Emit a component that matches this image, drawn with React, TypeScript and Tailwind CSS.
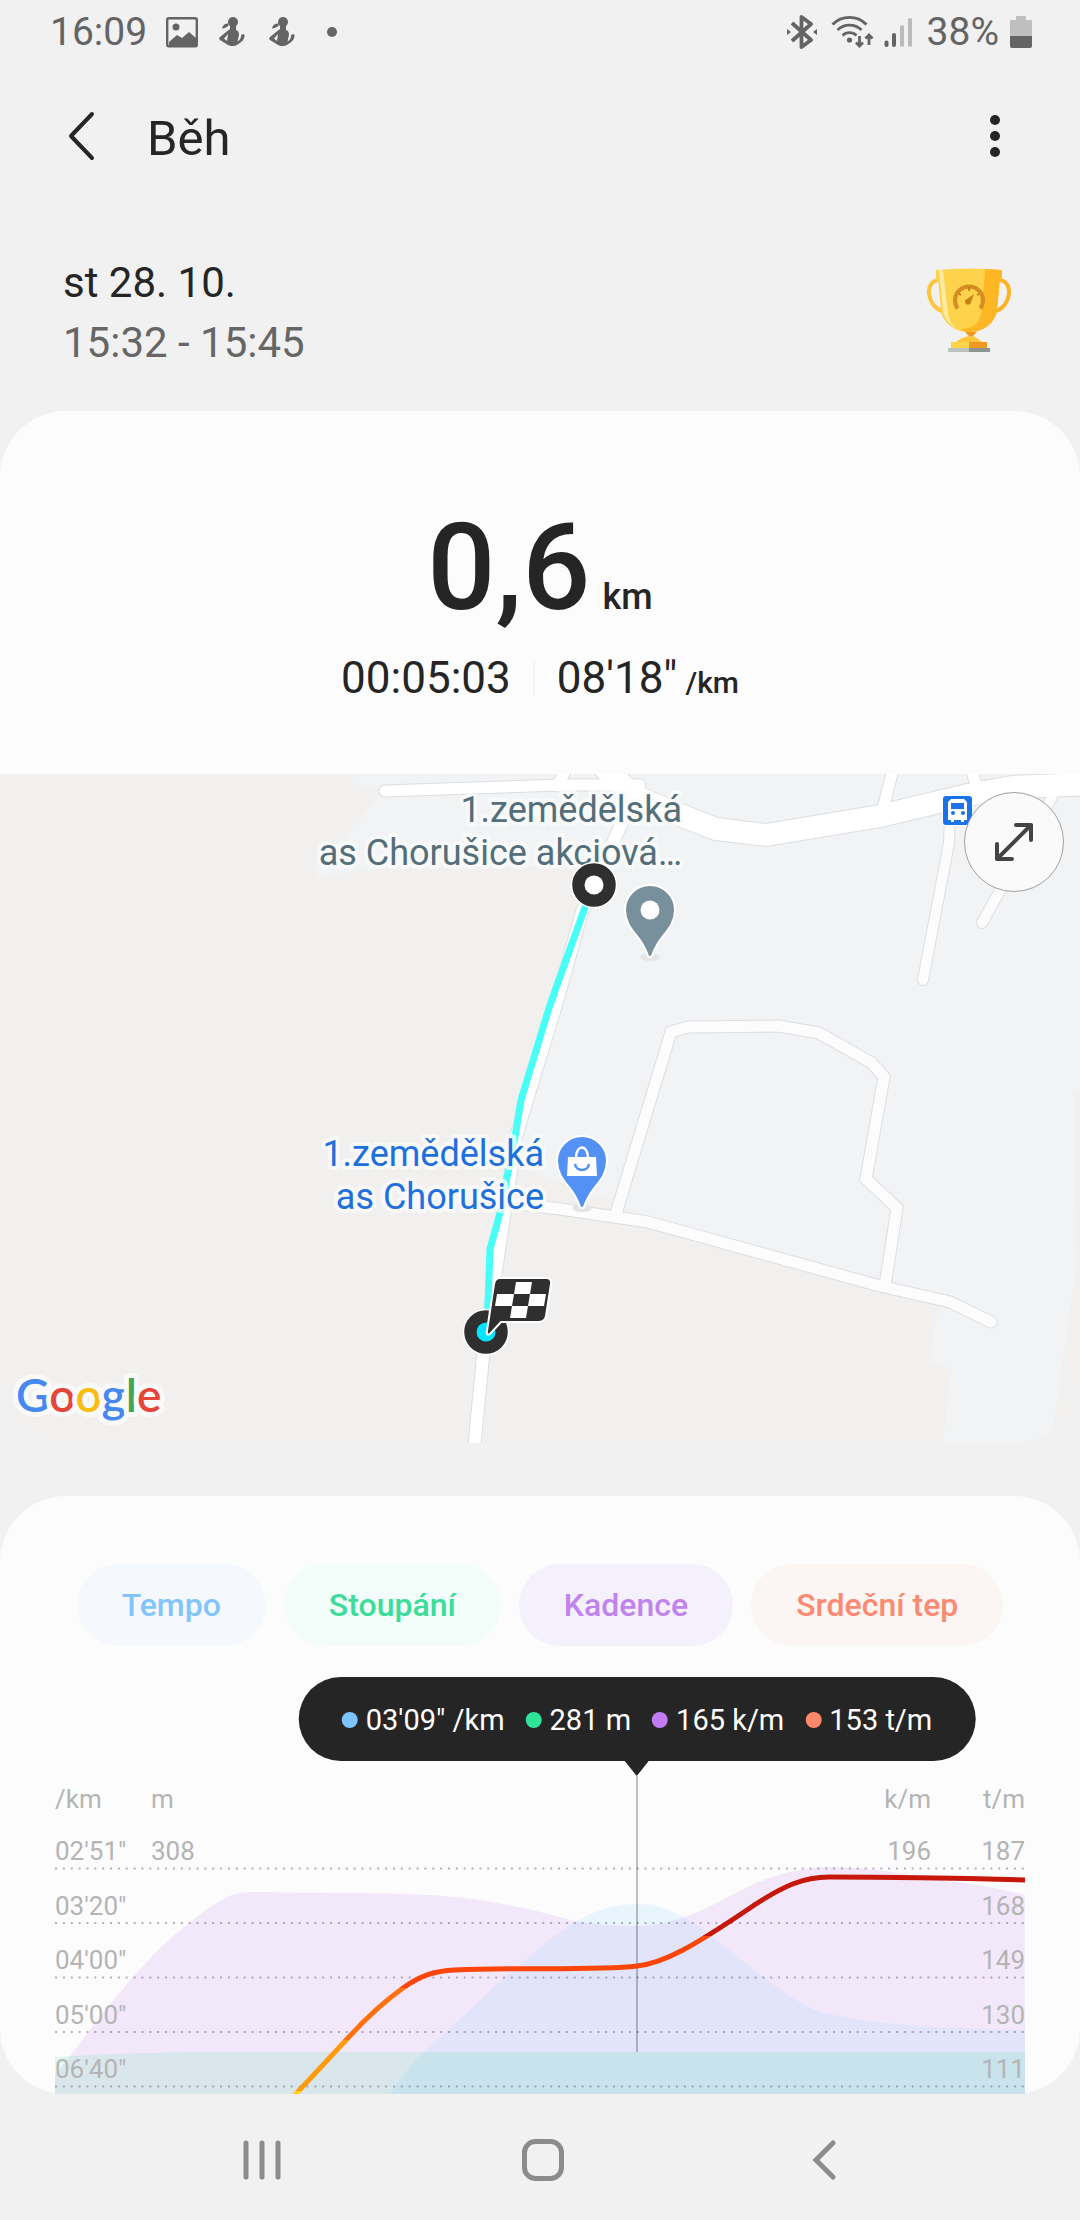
import { Fragment } from 'react';

const metrics = [
  { label: 'Tempo', value: `03'09" /km`, chip: 'bg-[#f5f9fd] text-[#83c4fb]', dot: 'bg-[#7cc3ff]' },
  { label: 'Stoupání', value: '281 m', chip: 'bg-[#f2fcf9] text-[#3cdc9a]', dot: 'bg-[#2fe39a]' },
  { label: 'Kadence', value: '165 k/m', chip: 'bg-[#f5f1fc] text-[#c183ec]', dot: 'bg-[#c27cf3]' },
  { label: 'Srdeční tep', value: '153 t/m', chip: 'bg-[#fbf5f4] text-[#fa8a72]', dot: 'bg-[#ff876b]' },
];

const axisRows = [
  { pace: `02'51"`, elevation: '308', cadence: '196', heart: '187' },
  { pace: `03'20"`, elevation: '', cadence: '', heart: '168' },
  { pace: `04'00"`, elevation: '', cadence: '', heart: '149' },
  { pace: `05'00"`, elevation: '', cadence: '', heart: '130' },
  { pace: `06'40"`, elevation: '', cadence: '', heart: '111' },
];

function WorkoutIcon() {
  return (
    <svg width="28" height="32" viewBox="0 0 28 32" fill="#646464" aria-hidden="true">
      <circle cx="15" cy="6" r="5" />
      <path d="M12 9h6v5c3 1 3.500 4 2.500 7l-1 4.500c2-1 3.500-3 3.500-5.500 0-2 3.500-2.500 3.500-.5 0 4-3 6.500-5.500 8-4 3.500-9 3.300-12.500.5L2 24c-1.300-1-1-2 0-3l8-6.500 2-1.500zM10 18l-4 4.500 3 2.500z" fillRule="evenodd" />
      <path d="M4 12.500c1-4 3-5 7-5l-1 3c-2 .5-3 2-6 2z" />
    </svg>
  );
}

function StatusBar() {
  return (
    <div className="flex h-[62px] items-center justify-between pl-[50px] pr-[48px] pt-px text-[39px] leading-[44px] text-[#646464]">
      <div className="flex items-center">
        <span>16:09</span>
        <svg className="ml-[19px]" width="32" height="32" viewBox="0 0 32 32" aria-hidden="true">
          <rect x="1.200" y="2.200" width="29.600" height="28" rx="1.500" fill="none" stroke="#646464" strokeWidth="2.400" />
          <circle cx="10" cy="11" r="3.500" fill="#646464" />
          <path d="M3 26l8-7 5 3 7-6 7 6v8H3z" fill="#646464" />
        </svg>
        <div className="ml-[20px] flex gap-[22px]">
          <WorkoutIcon />
          <WorkoutIcon />
        </div>
        <span className="ml-[31px] size-[10px] rounded-full bg-[#646464]" />
      </div>
      <div className="flex items-center">
        {/* Bluetooth */}
        <svg width="32" height="34" viewBox="0 0 32 34" aria-hidden="true">
          <path d="M6 8l19 17-9.500 7V2L25 9 6 26" fill="none" stroke="#646464" strokeWidth="3.800" strokeLinejoin="round" />
          <path d="M1 14l4 3-4 3zM31 14l-4 3 4 3z" fill="#646464" />
        </svg>
        {/* Wi-Fi */}
        <svg className="ml-[13px]" width="43" height="34" viewBox="0 0 43 34" fill="none" stroke="#646464" strokeWidth="2.800" aria-hidden="true">
          <path d="M1.500 9.500a24 24 0 0 1 34 0M6.500 15a17 17 0 0 1 24 0M11.500 20.500a10 10 0 0 1 14 0" />
          <circle cx="18.500" cy="25" r="2.600" fill="#646464" stroke="none" />
          <path d="M28.500 21v10M25 27.500l3.500 3.500 3.500-3.500M38 30V20M34.500 23.500L38 20l3.500 3.500" />
        </svg>
        {/* Signal */}
        <svg className="ml-[10px]" width="28" height="34" viewBox="0 0 28 34" strokeWidth="4" strokeLinecap="round" aria-hidden="true">
          <path d="M2.500 27.500v2.500M10 20v10" stroke="#646464" />
          <path d="M18 12v18M26 5v25" stroke="#bbb" />
        </svg>
        <span className="ml-[15px]">38%</span>
        {/* Battery */}
        <svg className="ml-[11px]" width="22" height="34" viewBox="0 0 22 34" aria-hidden="true">
          <path d="M6 1h10v4h5q1 0 1 1v15H0V6q0-1 1-1h5z" fill="#bfbfbf" />
          <path d="M0 21h22v10q0 2-2 2H2q-2 0-2-2z" fill="#646464" />
        </svg>
      </div>
    </div>
  );
}

function Trophy() {
  return (
    <svg width="90" height="90" viewBox="0 0 90 90" role="img" aria-label="Trofej">
      <path d="M14 12C0 14 3 38 18 43" fill="none" stroke="#fdc53c" strokeWidth="4" />
      <path d="M76 12C90 14 87 38 72 43" fill="none" stroke="#fdb424" strokeWidth="4" />
      <path d="M45 60v8c-5 1-10 3-13 6h26c-3-3-7-5-11-7l4-5z" fill="#fdc53c" />
      <path d="M41 64h12l-4 4h-4z" fill="#ee9a22" />
      <path d="M12 2q33-3 66 0v8h-2l-3 33c-2 12-14 21-28 21S19 55 17 43L14 10h-2z" fill="#fdd34c" />
      <path d="M61 1l17 1v8h-2l-3 33c-2 11-12 20-24 21-8 0-12-1-12-3 14 0 20-8 21-20z" fill="#fdb724" />
      <path d="M15 2h4l5 43c1 8 5 13 10 16-9-4-14-11-15-19z" fill="#feeaa0" />
      <path d="M33.500 40.500A14 14 0 1 1 56.500 40.500" fill="none" stroke="#d58c22" strokeWidth="4" />
      <path d="M45 19v4M35 26l2 1M55 26l-2 1" stroke="#b87512" strokeWidth="1.500" />
      <path d="M50 26l-3 8a3 3 0 1 1-4-3z" fill="#c98015" />
      <path d="M27 74h18v6H27z" fill="#fdd34c" />
      <path d="M45 74h18v6H45z" fill="#ee9a22" />
      <path d="M24 80h21v4H24z" fill="#b9c2bc" />
      <path d="M45 80h21v4H45z" fill="#8b9690" />
    </svg>
  );
}

const roads = [
  { d: 'M385 791L563 785L640 785', width: 11, fill: '#fff' },
  { d: 'M568 766L557 786', width: 11, fill: '#fff' },
  { d: 'M894 766L883 808', width: 11, fill: '#fff' },
  { d: 'M970 766L978 790', width: 11, fill: '#fff' },
  { d: 'M1052 797L982 923', width: 10, fill: '#fcfcfc' },
  { d: 'M950 815L949 843L923 980', width: 10, fill: '#fcfcfc' },
  { d: 'M615 1217L671 1032L688 1027L779 1026L819 1033L872 1063L884 1077L866 1179L897 1208L885 1286', width: 11, fill: '#fcfcfc' },
  { d: 'M510 1203L560 1209L615 1217L648 1222L880 1286L950 1302L991 1322', width: 11, fill: '#fcfcfc' },
  { d: 'M632 800L582 912L562 984L553 1015L527 1100L516 1137L507 1197L495 1277L483 1357L473 1460', width: 12, fill: '#fff' },
  { d: 'M592 756L634 796L680 815L716 829L766 835L880 816L968 795L1013 787L1090 784', width: 22, fill: '#fff' },
];

function RouteMap() {
  return (
    <div className="relative h-[669px] bg-[#f1f0ee]">
      <svg className="block h-full w-full" viewBox="0 774 1080 669" preserveAspectRatio="xMidYMid slice" role="img" aria-label="Mapa trasy">
        {/* Built-up area */}
        <path
          d="M346 774L357 785L380 789V797L343 838L315 865L318 877L400 866L590 866L582 912L553 1015L516 1137L528 1170L600 1197L650 1217L880 1282L938 1306L930 1362L952 1368L943 1443H1053V1430L1076 1267L1073 1090H1080V774Z"
          fill="#f1f3f5"
        />
        <g fill="none" strokeLinecap="round" strokeLinejoin="miter">
          {roads.map((road) => (
            <path key={road.d} d={road.d} stroke="#dcdee1" strokeWidth={road.width + 2} />
          ))}
          {roads.map((road) => (
            <path key={road.d} d={road.d} stroke={road.fill} strokeWidth={road.width} />
          ))}
          <path d="M593 885L556 988L549 1008L521 1100L515 1137L500 1213L490 1249L487 1331" stroke="#47fff6" strokeWidth="7" />
        </g>

        {/* Bus stop */}
        <rect x="942" y="795" width="31" height="31" rx="4" fill="#fff" />
        <rect x="943" y="796" width="29" height="29" rx="3" fill="#1a73e8" />
        <path d="M951 799h13l3 3v18h-3v2h-3v-2h-7v2h-3v-2h-3v-18z" fill="#fff" />
        <path d="M951 803h13v6h-13z" fill="#1a73e8" />
        <circle cx="953" cy="813" r="2" fill="#1a73e8" />
        <circle cx="963" cy="813" r="2" fill="#1a73e8" />

        <g
          className="font-['Roboto',sans-serif] text-[36px] [paint-order:stroke]"
          textAnchor="end"
          stroke="#fafbfb"
          strokeOpacity="0.8"
          strokeWidth="8"
          strokeLinejoin="round"
        >
          <text x="682" y="822" fill="#546e7a">1.zemědělská</text>
          <text x="682" y="865" fill="#546e7a">as Chorušice akciová…</text>
          <text x="544" y="1166" fill="#1f70dc">1.zemědělská</text>
          <text x="544" y="1209" fill="#1f70dc">as Chorušice</text>
        </g>

        {/* Place pins */}
        <ellipse cx="650" cy="957" rx="10" ry="4" fill="#e3e5e7" />
        <path d="M650 885a25 25 0 0 1 25 25c0 16-12 24-18 35-3 5-4 8-5 11q-2 2-4 0c-1-3-2-6-5-11-6-11-18-19-18-35a25 25 0 0 1 25-25z" fill="#78909c" stroke="#fff" strokeWidth="2" />
        <circle cx="650" cy="910" r="9.500" fill="#fff" />
        <ellipse cx="582" cy="1208" rx="10" ry="4" fill="#e3e5e7" />
        <path d="M582 1136a25 25 0 0 1 25 25c0 16-12 24-18 35-3 5-4 8-5 11q-2 2-4 0c-1-3-2-6-5-11-6-11-18-19-18-35a25 25 0 0 1 25-25z" fill="#5491f5" stroke="#fff" strokeWidth="2" />
        <path d="M568 1157h28l1 19h-30z" fill="#fff" />
        <path d="M576 1158c0-14 12-14 12 0" fill="none" stroke="#fff" strokeWidth="2.500" />
        <path d="M575 1164c1 8 13 8 14 0" fill="none" stroke="#5491f5" strokeWidth="2.500" />

        {/* Start and finish */}
        <circle cx="594" cy="885" r="22.500" fill="#2f2f2f" stroke="#fff" strokeWidth="1.500" />
        <circle cx="594" cy="885" r="9.500" fill="#fff" />
        <circle cx="486" cy="1332" r="22.500" fill="#2f2f2f" stroke="#fff" strokeWidth="1.500" />
        <circle cx="486" cy="1332" r="9.500" fill="#00e5ff" />
        <path d="M500 1278h46q6 0 5 6l-5 32q-1 6-7 6h-38l-11 12q-4 2-3-3l7-47q1-6 6-6z" fill="#2f2f2f" stroke="#fff" strokeWidth="2" />
        <path d="M516 1282h16l-2 12h-16zM497 1294h17l-2 12h-17zM530 1294h16l-2 12h-16zM512 1306h16l-2 12h-16z" fill="#fff" />

        <text
          className="font-['Lato',sans-serif] text-[46px] font-semibold [paint-order:stroke]"
          x="16"
          y="1412"
          stroke="#f9f9f9"
          strokeWidth="10"
          strokeLinejoin="round"
        >
          <tspan fill="#4687f0">G</tspan>
          <tspan fill="#e4463a">o</tspan>
          <tspan fill="#f8bd12">o</tspan>
          <tspan fill="#4687f0">g</tspan>
          <tspan fill="#3ba757">l</tspan>
          <tspan fill="#e4463a">e</tspan>
        </text>
      </svg>
      <button
        type="button"
        aria-label="Zvětšit mapu"
        className="absolute right-4 top-[18px] flex size-[100px] items-center justify-center rounded-full border border-[#a0a0a0] bg-[#fafafa]"
      >
        <svg width="40" height="40" viewBox="0 0 40 40" fill="none" stroke="#444" strokeWidth="4" strokeLinecap="round" strokeLinejoin="round" aria-hidden="true">
          <path d="M3 37L37 3M22 3h15v15M3 22v15h15" />
        </svg>
      </button>
    </div>
  );
}

function Chart() {
  return (
    <div className="relative h-[318px] text-[26px] leading-[30px] text-[#b4b4b4]">
      <svg className="absolute inset-0 h-full w-full" viewBox="0 0 970 318" preserveAspectRatio="none" aria-hidden="true">
        <defs>
          <linearGradient id="heart" gradientUnits="userSpaceOnUse" x1="0" y1="0" x2="0" y2="318">
            <stop offset="0.503" stopColor="#c5170a" />
            <stop offset="0.503" stopColor="#fb460b" />
            <stop offset="0.667" stopColor="#fb460b" />
            <stop offset="0.667" stopColor="#ff700f" />
            <stop offset="0.829" stopColor="#ff700f" />
            <stop offset="0.829" stopColor="#fd9b0d" />
            <stop offset="0.992" stopColor="#fd9b0d" />
            <stop offset="0.992" stopColor="#ffd012" />
          </linearGradient>
        </defs>
        <path
          d="M0 299C25 268 48 235 78 201C95 182 115 161 138 144C160 127 175 116 193 116L289 117C340 117 385 119 410 122C460 129 490 137 519 145C545 149 560 150 582 150C625 150 665 125 692 111C720 98 750 91 774 91C815 91 850 98 881 104C920 107 945 113 970 119V318H0Z"
          fill="#f3e8fa"
        />
        <path
          d="M335 318C360 280 375 270 393 254C415 233 430 221 444 206L485 172C515 146 545 128 582 128C625 128 655 160 712 204C745 228 760 236 778 239C820 248 880 253 970 254V318Z"
          fill="#7bd0ff"
          fillOpacity="0.14"
        />
        <path d="M0 281Q80 276 165 276H970V318H0Z" fill="#2fe39a" fillOpacity="0.13" />
        <path d="M0 92.500H970M0 147H970M0 201.500H970M0 256H970M0 310.500H970" stroke="#6e6478" strokeOpacity="0.5" strokeWidth="2" strokeDasharray="2 5.860" />
        <path d="M582 0V276" stroke="#000" strokeOpacity="0.24" strokeWidth="2" />
        <path
          d="M239 320L293 262C312 241 330 225 348 212C365 200 378 195 400 194C460 191 540 195 582 190C610 187 640 169 692 134C730 108 750 101 774 101C830 101 900 102 970 104"
          fill="none"
          stroke="url(#heart)"
          strokeWidth="5"
        />
      </svg>
      <div className="relative flex h-[38px] items-end">
        <span className="w-[96px]">/km</span>
        <span>m</span>
        <span className="ml-auto">k/m</span>
        <span className="w-[94px] text-right">t/m</span>
      </div>
      <div className="relative grid h-[272px] grid-rows-5">
        {axisRows.map((row) => (
          <div key={row.pace} className="flex items-end pb-0.5">
            <span className="w-[96px]">{row.pace}</span>
            <span>{row.elevation}</span>
            <span className="ml-auto">{row.cadence}</span>
            <span className="w-[94px] text-right">{row.heart}</span>
          </div>
        ))}
      </div>
    </div>
  );
}

export default function App() {
  return (
    <div className="flex min-h-screen flex-col bg-[#f1f1f1] font-['Roboto',sans-serif] text-[#252525]">
      <StatusBar />

      <header className="flex h-[148px] items-center justify-between pl-[64px] pr-[66px]">
        <div className="flex items-center gap-[49px]">
          <button type="button" aria-label="Zpět">
            <svg width="34" height="50" viewBox="0 0 34 50" fill="none" stroke="#252525" strokeWidth="4" strokeLinecap="round" strokeLinejoin="round" aria-hidden="true">
              <path d="M28 3L7 25L28 47" />
            </svg>
          </button>
          <h1 className="pt-[6px] text-[49px] leading-[56px]">Běh</h1>
        </div>
        <button type="button" aria-label="Další možnosti" className="flex w-[38px] flex-col items-center gap-[6px]">
          <span className="size-[10px] rounded-full bg-[#252525]" />
          <span className="size-[10px] rounded-full bg-[#252525]" />
          <span className="size-[10px] rounded-full bg-[#252525]" />
        </button>
      </header>

      <div className="flex items-center justify-between pb-[38px] pl-[63px] pr-[66px] pt-[43px] text-[42px] leading-[60px]">
        <div>
          <p>st 28. 10.</p>
          <p className="text-[#666]">15:32 - 15:45</p>
        </div>
        <Trophy />
      </div>

      <section className="overflow-hidden rounded-[66px]">
        <div className="bg-[#fcfcfc] pb-[70px] pt-[96px]">
          <div className="flex items-baseline justify-center gap-[12px] font-medium">
            <span className="font-['Liberation_Sans_Narrow','Roboto',sans-serif] text-[120px] leading-[122px]">0,6</span>
            <span className="text-[36px] leading-[40px]">km</span>
          </div>
          <div className="mt-[23px] flex items-center justify-center gap-[22px] text-[44px] leading-[52px]">
            <span>00:05:03</span>
            <span className="h-[34px] w-[2px] bg-[#f3f3f3]" />
            <span className="flex items-baseline gap-[8px]">
              08'18"
              <span className="text-[30px] font-medium leading-[34px]">/km</span>
            </span>
          </div>
        </div>
        <RouteMap />
      </section>

      <section className="mt-[53px] rounded-[66px] bg-[#fcfcfc] px-[55px] pt-[68px]">
        <div className="flex justify-center gap-[18px]">
          {metrics.map((metric) => (
            <button
              key={metric.label}
              type="button"
              className={`h-[82px] rounded-full px-[45px] text-[32px] font-medium leading-[40px] ${metric.chip}`}
            >
              {metric.label}
            </button>
          ))}
        </div>

        <div className="relative h-[130px]">
          <div className="absolute left-[60%] top-[31px] -translate-x-1/2">
            <div className="flex h-[84px] items-center whitespace-nowrap rounded-full bg-[#252525] px-[43px] pt-0.5 text-[29px] leading-[34px] text-white">
              {metrics.map((metric, index) => (
                <Fragment key={metric.label}>
                  <span className={`mr-[8px] size-[16px] rounded-full ${metric.dot}`} />
                  <span className={index < metrics.length - 1 ? 'mr-[21px]' : ''}>{metric.value}</span>
                </Fragment>
              ))}
            </div>
            <svg className="mx-auto block" width="24" height="15" viewBox="0 0 24 15" aria-hidden="true">
              <path d="M0 0H24L12 15Z" fill="#252525" />
            </svg>
          </div>
        </div>

        <Chart />
      </section>

      <nav className="flex h-[126px] items-center justify-center pl-[6px] pt-[6px]">
        <button type="button" aria-label="Poslední aplikace" className="flex w-[281px] justify-center">
          <svg width="44" height="44" viewBox="0 0 44 44" stroke="#8c8c8c" strokeWidth="5" strokeLinecap="round" aria-hidden="true">
            <path d="M6 5V39M22 5V39M38 5V39" />
          </svg>
        </button>
        <button type="button" aria-label="Domů" className="flex w-[281px] justify-center">
          <svg width="44" height="44" viewBox="0 0 44 44" fill="none" stroke="#8c8c8c" strokeWidth="5" aria-hidden="true">
            <rect x="3.500" y="3.500" width="37" height="37" rx="11" />
          </svg>
        </button>
        <button type="button" aria-label="Zpět" className="flex w-[281px] justify-center">
          <svg width="44" height="44" viewBox="0 0 44 44" fill="none" stroke="#8c8c8c" strokeWidth="5" strokeLinecap="round" aria-hidden="true">
            <path d="M31 5L14 22L31 39" />
          </svg>
        </button>
      </nav>
    </div>
  );
}
